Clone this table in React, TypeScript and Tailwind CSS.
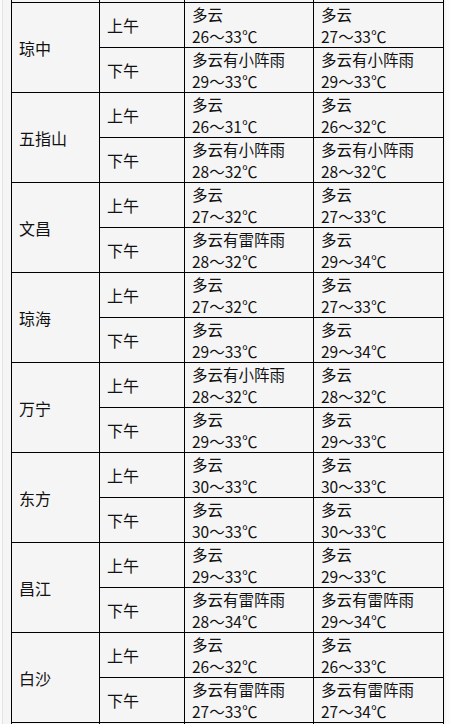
type Half = { period: string; a: [string, string]; b: [string, string] };
type City = { name: string; am: Half; pm: Half };

const h = (period: string, a1: string, a2: string, b1: string, b2: string): Half => ({
  period,
  a: [a1, a2],
  b: [b1, b2],
});

const CITIES: City[] = [
  {
    name: "琼中",
    am: h("上午", "多云", "26～33℃", "多云", "27～33℃"),
    pm: h("下午", "多云有小阵雨", "29～33℃", "多云有小阵雨", "29～33℃"),
  },
  {
    name: "五指山",
    am: h("上午", "多云", "26～31℃", "多云", "26～32℃"),
    pm: h("下午", "多云有小阵雨", "28～32℃", "多云有小阵雨", "28～32℃"),
  },
  {
    name: "文昌",
    am: h("上午", "多云", "27～32℃", "多云", "27～33℃"),
    pm: h("下午", "多云有雷阵雨", "28～32℃", "多云", "29～34℃"),
  },
  {
    name: "琼海",
    am: h("上午", "多云", "27～32℃", "多云", "27～33℃"),
    pm: h("下午", "多云", "29～33℃", "多云", "29～34℃"),
  },
  {
    name: "万宁",
    am: h("上午", "多云有小阵雨", "28～32℃", "多云", "28～32℃"),
    pm: h("下午", "多云", "29～33℃", "多云", "29～33℃"),
  },
  {
    name: "东方",
    am: h("上午", "多云", "30～33℃", "多云", "30～33℃"),
    pm: h("下午", "多云", "30～33℃", "多云", "30～33℃"),
  },
  {
    name: "昌江",
    am: h("上午", "多云", "29～33℃", "多云", "29～33℃"),
    pm: h("下午", "多云有雷阵雨", "28～34℃", "多云有雷阵雨", "29～34℃"),
  },
  {
    name: "白沙",
    am: h("上午", "多云", "26～32℃", "多云", "26～33℃"),
    pm: h("下午", "多云有雷阵雨", "27～33℃", "多云有雷阵雨", "27～34℃"),
  },
];

const cell = "bg-[#f5f5f5]";

function Forecast({ lines }: { lines: [string, string] }) {
  return (
    <div className={`${cell} flex h-[44px] flex-col gap-px px-[7px] pt-px text-[15.5px] leading-[21px]`}>
      <div>{lines[0]}</div>
      <div>{lines[1]}</div>
    </div>
  );
}

function HalfRow({ half }: { half: Half }) {
  return (
    <>
      <div className={`${cell} flex h-[44px] items-center px-[7px]`}>{half.period}</div>
      <Forecast lines={half.a} />
      <Forecast lines={half.b} />
    </>
  );
}

export default function App() {
  return (
    <div
      className="h-[724px] w-[450px] overflow-hidden bg-[#fafafa] pl-[2px] text-[16px] text-[#111]"
      style={{ fontFamily: '"Noto Sans CJK SC", "Noto Sans", sans-serif' }}
    >
      <div className="h-full w-[444px] border-l border-[#e3e3e3] bg-[#f5f5f5] pl-[8px]">
        <div className="grid w-[433px] grid-cols-[87px_84px_128px_129px] gap-px bg-black px-px">
          {/* tail of the row above */}
          <div className={`${cell} h-[2px]`} />
          <div className={`${cell} h-[2px]`} />
          <div className={`${cell} h-[2px]`} />
          <div className={`${cell} h-[2px]`} />

          {CITIES.map((c) => (
            <div key={c.name} className="contents">
              <div className={`${cell} row-span-2 flex items-center px-[7px]`}>{c.name}</div>
              <HalfRow half={c.am} />
              <HalfRow half={c.pm} />
            </div>
          ))}

          {/* head of the row below */}
          <div className={`${cell} h-[20px]`} />
          <div className={`${cell} h-[20px]`} />
          <div className={`${cell} h-[20px]`} />
          <div className={`${cell} h-[20px]`} />
        </div>
      </div>
    </div>
  );
}
